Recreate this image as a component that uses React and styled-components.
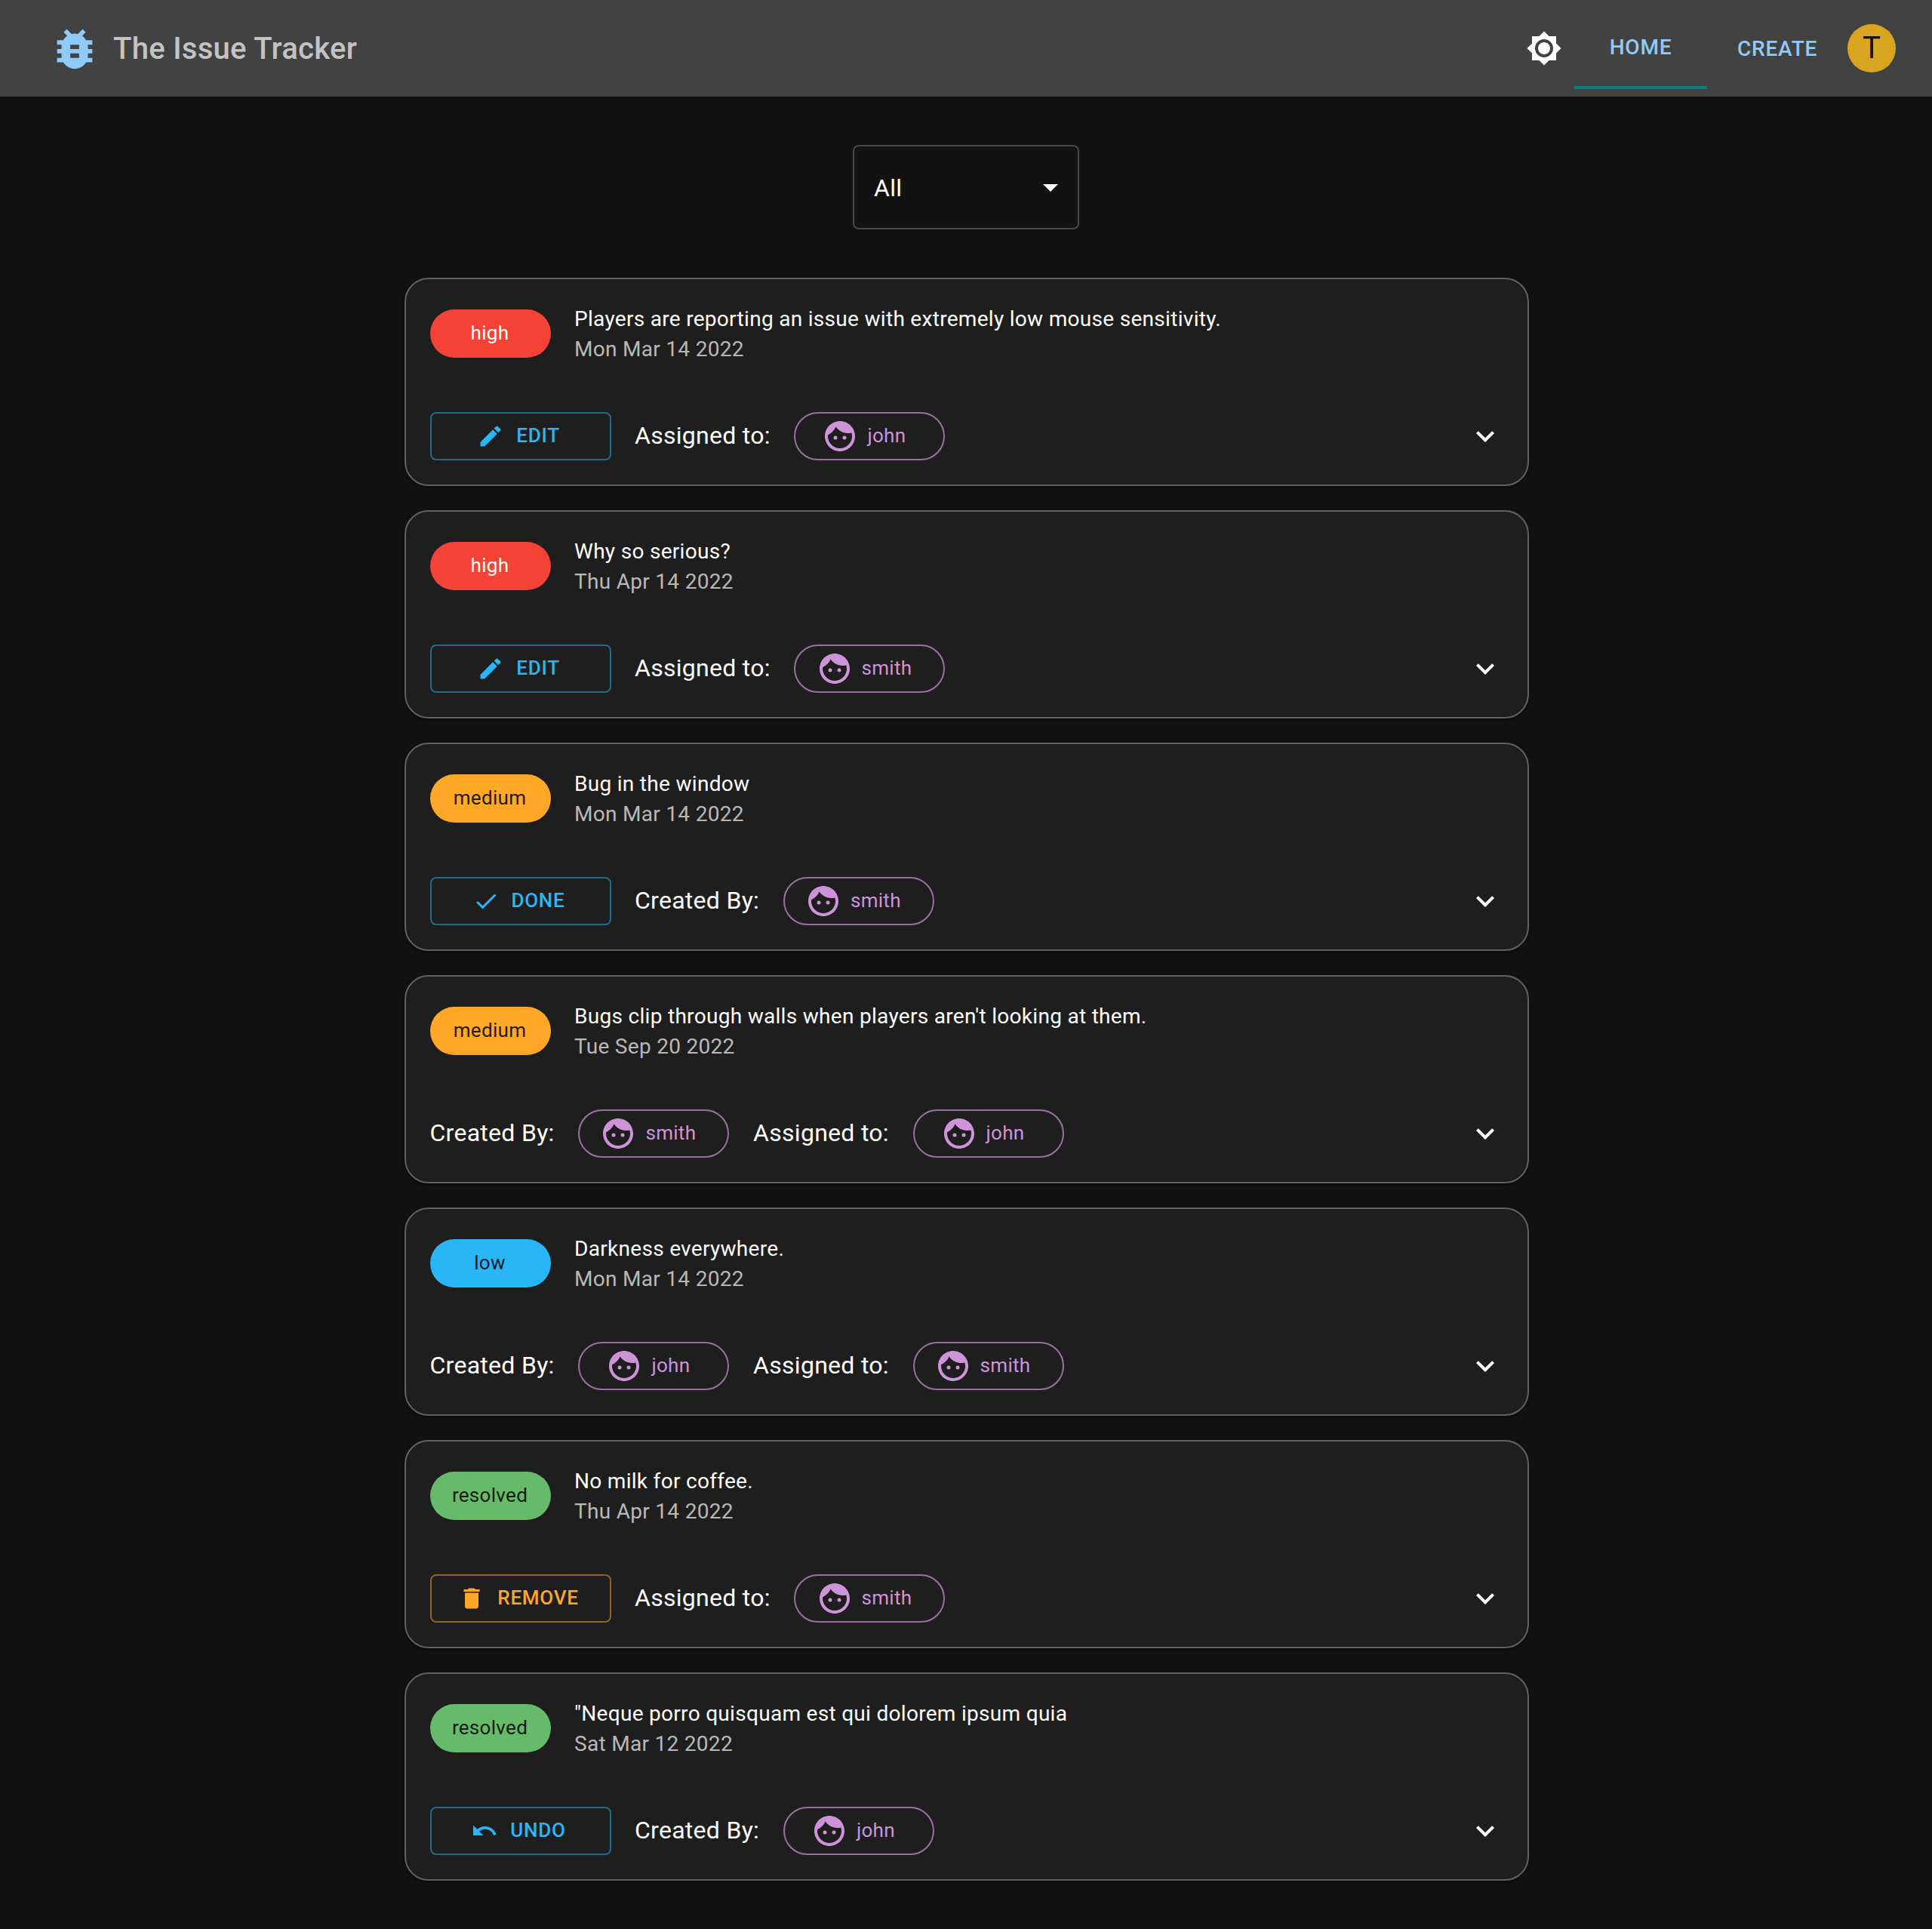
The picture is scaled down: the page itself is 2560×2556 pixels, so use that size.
import React from "react";
import styled, { createGlobalStyle } from "styled-components";
import {
  MdArrowDropDown,
  MdBrightness7,
  MdBugReport,
  MdDelete,
  MdDone,
  MdEdit,
  MdExpandMore,
  MdFace,
  MdUndo,
} from "react-icons/md";

const GlobalStyle = createGlobalStyle`
  *, *::before, *::after { box-sizing: border-box; }
  body {
    margin: 0;
    background: #121212;
    color: #fff;
    font-family: Roboto, "Liberation Sans", sans-serif;
    font-size: 32px;
  }
  svg { display: block; flex-shrink: 0; }
  button { font-family: inherit; margin: 0; cursor: pointer; }
`;

const tones = {
  high: { bg: "#f44336", fg: "#fff" },
  medium: { bg: "#ffa726", fg: "rgba(0, 0, 0, 0.87)" },
  low: { bg: "#29b6f6", fg: "rgba(0, 0, 0, 0.87)" },
  resolved: { bg: "#66bb6a", fg: "rgba(0, 0, 0, 0.87)" },
};

const AppBar = styled.header`
  display: flex;
  align-items: center;
  height: 128px;
  padding: 0 48px 0 64px;
  background: #424242;
`;

const Logo = styled(MdBugReport)`
  width: 70px;
  height: 70px;
  margin-top: 2px;
  color: #90caf9;
`;

const Brand = styled.h1`
  flex: 1;
  margin: 0 0 0 16px;
  padding-top: 2px;
  font-size: 40px;
  font-weight: 500;
  line-height: 64px;
  letter-spacing: 0.3px;
  color: rgba(255, 255, 255, 0.7);
`;

const Nav = styled.nav`
  display: flex;
  align-items: center;
`;

const ThemeToggle = styled.button`
  padding: 16px;
  border: 0;
  background: none;
  color: #fff;
  svg { width: 48px; height: 48px; }
`;

const NavButton = styled.button`
  width: ${(p) => p.$width}px;
  height: 108px;
  padding: 0;
  border: 0;
  border-bottom: ${(p) => (p.$active ? "4px solid #008080" : "0")};
  background: none;
  color: #90caf9;
  font-size: 28px;
  font-weight: 500;
  line-height: 49px;
  letter-spacing: 0.8px;
  text-transform: uppercase;
`;

const Avatar = styled.div`
  display: flex;
  align-items: center;
  justify-content: center;
  width: 64px;
  height: 64px;
  border-radius: 50%;
  background: #daa520;
  color: #121212;
  font-size: 40px;
  line-height: 1;
`;

const Main = styled.main`
  display: flex;
  flex-direction: column;
  align-items: center;
  padding: 64px 0;
`;

const Filter = styled.div`
  display: flex;
  align-items: center;
  justify-content: space-between;
  width: 300px;
  height: 112px;
  padding: 0 12px 0 26px;
  border: 2px solid rgba(255, 255, 255, 0.23);
  border-radius: 8px;
  letter-spacing: 0.3px;
  svg { width: 48px; height: 48px; }
`;

const FilterValue = styled.span`
  padding-top: 2px;
`;

const IssueList = styled.div`
  display: grid;
  gap: 32px;
  width: 1490px;
  margin: 64px 0 0 1px;
`;

const Card = styled.article`
  display: flex;
  flex-direction: column;
  justify-content: space-between;
  height: 276px;
  padding: 32px;
  border: 2px solid #616161;
  border-radius: 32px;
  background: #1e1e1e;
  box-shadow: 0 4px 2px -2px rgba(0, 0, 0, 0.2), 0 2px 2px rgba(0, 0, 0, 0.14),
    0 2px 6px rgba(0, 0, 0, 0.12);
`;

const CardRow = styled.div`
  display: flex;
  align-items: center;
  gap: 31.75px;
`;

const Caption = styled.span`
  padding-bottom: 2px;
`;

const Priority = styled.span`
  display: flex;
  align-items: center;
  justify-content: center;
  width: 160px;
  height: 64px;
  margin-right: -0.25px;
  padding-right: 1px;
  border-radius: 32px;
  background: ${(p) => tones[p.$level].bg};
  color: ${(p) => tones[p.$level].fg};
  font-size: 26px;
  letter-spacing: 0.3px;
`;

const Summary = styled.div`
  margin-bottom: -1px;
  padding-top: 1px;
  font-size: 28px;
  line-height: 40px;
  letter-spacing: 0.3px;
`;

const IssueDate = styled.div`
  color: rgba(255, 255, 255, 0.7);
`;

const ActionButton = styled.button`
  display: flex;
  align-items: center;
  justify-content: center;
  gap: 16px;
  width: 240px;
  height: 64px;
  margin-right: -0.25px;
  padding: 0 21px 0 16px;
  border: 2px solid ${(p) => (p.$warning ? "rgba(255, 167, 38, 0.5)" : "rgba(41, 182, 246, 0.5)")};
  border-radius: 8px;
  background: none;
  color: ${(p) => (p.$warning ? "#ffa726" : "#29b6f6")};
  font-size: 26px;
  font-weight: 500;
  letter-spacing: 0.74px;
  text-transform: uppercase;
  svg { width: 36px; height: 36px; }
`;

const Label = styled.span`
  width: ${(p) => p.$width}px;
  padding-bottom: 2px;
  letter-spacing: 0.28px;
  white-space: nowrap;
`;

const UserChip = styled.span`
  display: flex;
  align-items: center;
  justify-content: center;
  gap: 12px;
  width: 200px;
  height: 64px;
  padding: 0 24.5px 0 9.5px;
  border: 2px solid rgba(206, 147, 216, 0.7);
  border-radius: 32px;
  color: #ce93d8;
  font-size: 26px;
  letter-spacing: 0.3px;
  svg { width: 48px; height: 48px; }
`;

const Expand = styled.button`
  margin-left: auto;
  padding: 0;
  border: 0;
  background: none;
  color: #fff;
  svg { width: 48px; height: 48px; }
`;

const actions = {
  edit: MdEdit,
  done: MdDone,
  remove: MdDelete,
  undo: MdUndo,
};

const issues = [
  { level: "high", title: "Players are reporting an issue with extremely low mouse sensitivity.", date: "Mon Mar 14 2022", action: "edit", assignee: "john" },
  { level: "high", title: "Why so serious?", date: "Thu Apr 14 2022", action: "edit", assignee: "smith" },
  { level: "medium", title: "Bug in the window", date: "Mon Mar 14 2022", action: "done", author: "smith" },
  { level: "medium", title: "Bugs clip through walls when players aren't looking at them.", date: "Tue Sep 20 2022", author: "smith", assignee: "john" },
  { level: "low", title: "Darkness everywhere.", date: "Mon Mar 14 2022", author: "john", assignee: "smith" },
  { level: "resolved", title: "No milk for coffee.", date: "Thu Apr 14 2022", action: "remove", assignee: "smith" },
  { level: "resolved", title: "\"Neque porro quisquam est qui dolorem ipsum quia", date: "Sat Mar 12 2022", action: "undo", author: "john" },
];

function Person({ label, labelWidth, name }) {
  return (
    <>
      <Label $width={labelWidth}>{label}</Label>
      <UserChip>
        <MdFace />
        <Caption>{name}</Caption>
      </UserChip>
    </>
  );
}

function Issue({ level, title, date, action, author, assignee }) {
  const ActionIcon = actions[action];
  return (
    <Card>
      <CardRow>
        <Priority $level={level}>
          <Caption>{level}</Caption>
        </Priority>
        <Summary>
          <div>{title}</div>
          <IssueDate>{date}</IssueDate>
        </Summary>
      </CardRow>
      <CardRow>
        {action && (
          <ActionButton $warning={action === "remove"}>
            <ActionIcon />
            <Caption>{action}</Caption>
          </ActionButton>
        )}
        {author && <Person label="Created By:" labelWidth={165.1} name={author} />}
        {assignee && <Person label="Assigned to:" labelWidth={179.7} name={assignee} />}
        <Expand aria-label="Expand">
          <MdExpandMore />
        </Expand>
      </CardRow>
    </Card>
  );
}

export default function App() {
  return (
    <>
      <GlobalStyle />
      <AppBar>
        <Logo />
        <Brand>The Issue Tracker</Brand>
        <Nav>
          <ThemeToggle aria-label="Toggle theme">
            <MdBrightness7 />
          </ThemeToggle>
          <NavButton $width={176} $active>Home</NavButton>
          <NavButton $width={186}>Create</NavButton>
          <Avatar>T</Avatar>
        </Nav>
      </AppBar>
      <Main>
        <Filter>
          <FilterValue>All</FilterValue>
          <MdArrowDropDown />
        </Filter>
        <IssueList>
          {issues.map((issue) => (
            <Issue key={issue.title} {...issue} />
          ))}
        </IssueList>
      </Main>
    </>
  );
}
